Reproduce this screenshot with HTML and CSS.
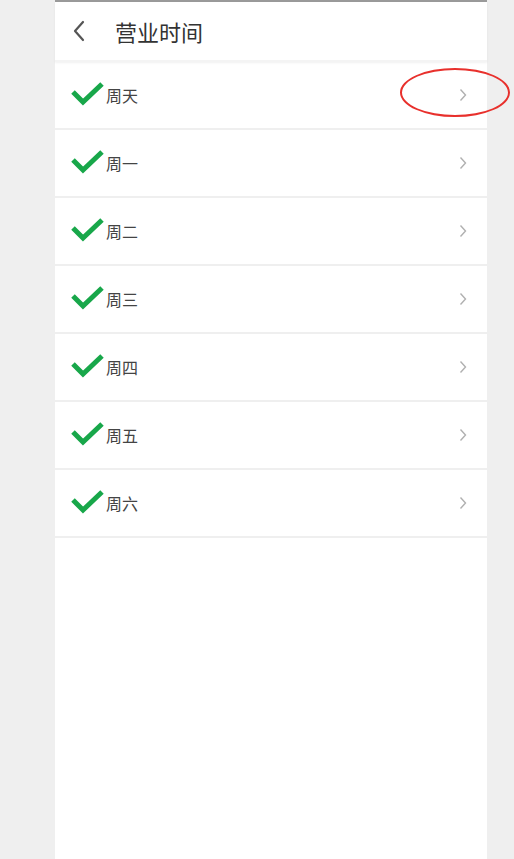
FILE: index.html
```html
<!DOCTYPE html>
<html>
<head>
	<title>营业时间</title>
	<meta http-equiv="content-type" content="text/html;charset=utf-8" />
	<link rel="stylesheet" href="styles.css">
</head>
<body>
	<div class="page">
		<div class="header">
			<svg class="back" width="14" height="22" viewBox="0 0 14 22"><path d="M11 2 L3 11 L11 20" fill="none" stroke="#555" stroke-width="2.2" stroke-linecap="round" stroke-linejoin="round"/></svg>
			<span class="title">营业时间</span>
		</div>
		<div class="list">
			<div class="row">
				<svg class="check" width="34" height="26" viewBox="0 0 34 26"><path d="M2 11 L12 21 L31 3" fill="none" stroke="#18a74a" stroke-width="5"/></svg>
				<span class="day">周天</span>
				<svg class="arrow" width="8" height="14" viewBox="0 0 8 14"><path d="M1.5 1.5 L6.5 7 L1.5 12.5" fill="none" stroke="#b0b0b0" stroke-width="1.4"/></svg>
				<span class="ring"></span>
			</div>
			<div class="row">
				<svg class="check" width="34" height="26" viewBox="0 0 34 26"><path d="M2 11 L12 21 L31 3" fill="none" stroke="#18a74a" stroke-width="5"/></svg>
				<span class="day">周一</span>
				<svg class="arrow" width="8" height="14" viewBox="0 0 8 14"><path d="M1.5 1.5 L6.5 7 L1.5 12.5" fill="none" stroke="#b0b0b0" stroke-width="1.4"/></svg>
			</div>
			<div class="row">
				<svg class="check" width="34" height="26" viewBox="0 0 34 26"><path d="M2 11 L12 21 L31 3" fill="none" stroke="#18a74a" stroke-width="5"/></svg>
				<span class="day">周二</span>
				<svg class="arrow" width="8" height="14" viewBox="0 0 8 14"><path d="M1.5 1.5 L6.5 7 L1.5 12.5" fill="none" stroke="#b0b0b0" stroke-width="1.4"/></svg>
			</div>
			<div class="row">
				<svg class="check" width="34" height="26" viewBox="0 0 34 26"><path d="M2 11 L12 21 L31 3" fill="none" stroke="#18a74a" stroke-width="5"/></svg>
				<span class="day">周三</span>
				<svg class="arrow" width="8" height="14" viewBox="0 0 8 14"><path d="M1.5 1.5 L6.5 7 L1.5 12.5" fill="none" stroke="#b0b0b0" stroke-width="1.4"/></svg>
			</div>
			<div class="row">
				<svg class="check" width="34" height="26" viewBox="0 0 34 26"><path d="M2 11 L12 21 L31 3" fill="none" stroke="#18a74a" stroke-width="5"/></svg>
				<span class="day">周四</span>
				<svg class="arrow" width="8" height="14" viewBox="0 0 8 14"><path d="M1.5 1.5 L6.5 7 L1.5 12.5" fill="none" stroke="#b0b0b0" stroke-width="1.4"/></svg>
			</div>
			<div class="row">
				<svg class="check" width="34" height="26" viewBox="0 0 34 26"><path d="M2 11 L12 21 L31 3" fill="none" stroke="#18a74a" stroke-width="5"/></svg>
				<span class="day">周五</span>
				<svg class="arrow" width="8" height="14" viewBox="0 0 8 14"><path d="M1.5 1.5 L6.5 7 L1.5 12.5" fill="none" stroke="#b0b0b0" stroke-width="1.4"/></svg>
			</div>
			<div class="row">
				<svg class="check" width="34" height="26" viewBox="0 0 34 26"><path d="M2 11 L12 21 L31 3" fill="none" stroke="#18a74a" stroke-width="5"/></svg>
				<span class="day">周六</span>
				<svg class="arrow" width="8" height="14" viewBox="0 0 8 14"><path d="M1.5 1.5 L6.5 7 L1.5 12.5" fill="none" stroke="#b0b0b0" stroke-width="1.4"/></svg>
			</div>
		</div>
	</div>
</body>
</html>
```

FILE: styles.css
```css
*{padding:0;margin:0;box-sizing:border-box;}
html,body{height:100%;}
body{background:#efefef;font-family:"Noto Sans CJK SC","Noto Sans",sans-serif;}

.page{width:432px;margin-left:55px;min-height:100%;background:#fff;border-top:2px solid #9a9a9a;}

.header{height:60px;display:flex;align-items:center;padding-left:17px;box-shadow:0 1px 2px rgba(0,0,0,.06);border-bottom:2px solid #f4f4f4;}
.back{display:block;margin-right:29px;}
.title{font-size:22px;color:#333;line-height:1;}

.row{position:relative;height:68px;display:flex;align-items:center;padding-left:16px;padding-right:20px;border-bottom:2px solid #efefef;}
.check{display:block;margin-right:1px;margin-top:-2px;}
.day{font-size:16px;color:#444;flex:1;}
.arrow{display:block;}
.ring{position:absolute;left:345px;top:6px;width:110px;height:49px;border:2.5px solid #e8302c;border-radius:50%;}
```
